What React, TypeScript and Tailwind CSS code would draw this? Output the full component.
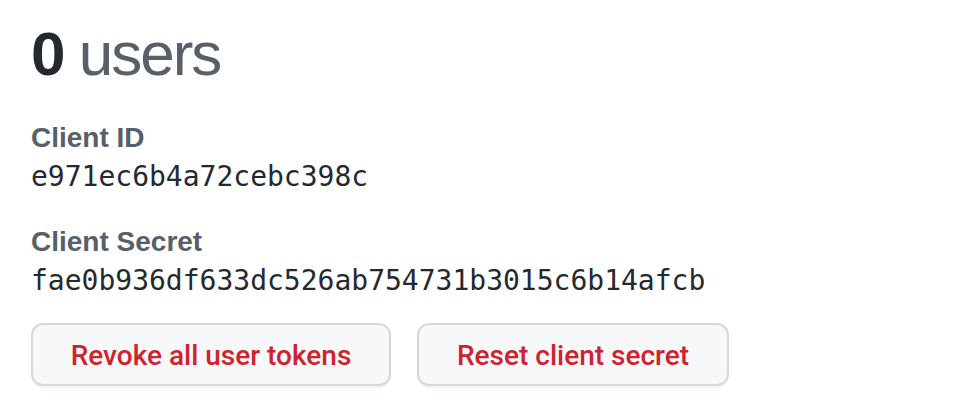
export default function App() {
  const fields = [
    { label: 'Client ID', value: 'e971ec6b4a72cebc398c' },
    { label: 'Client Secret', value: 'fae0b936df633dc526ab754731b3015c6b14afcb' },
  ];

  return (
    <div className="min-h-screen bg-white pl-[31px] pt-[23px] font-['Liberation_Sans',Arial,sans-serif] text-[#24292f]">
      {/* user count */}
      <h2 className="text-[62px] leading-none tracking-[-2px]">
        <span className="font-bold text-[#24292f]">0</span>{' '}
        <span className="font-normal text-[#57606a]">users</span>
      </h2>

      <div className="mt-[34px] flex flex-col gap-[26px]">
        {fields.map((f) => (
          <div key={f.label}>
            <div className="text-[28px] font-bold leading-[38px] text-[#57606a]">{f.label}</div>
            <div className="font-['DejaVu_Sans_Mono',Menlo,monospace] text-[28px] leading-[40px] text-[#24292f]">
              {f.value}
            </div>
          </div>
        ))}
      </div>

      <div className="mt-[22px] flex gap-[26px] font-['Roboto',Arial,sans-serif]">
        <button className="w-[360px] rounded-[12px] border-2 border-[#d6d9dc] bg-[#f6f8fa] pt-[11px] pb-[9px] text-center text-[28px] font-medium leading-[39px] text-[#cf222e] shadow-[0_2px_0_rgba(27,31,36,0.05)]">
          Revoke all user tokens
        </button>
        <button className="w-[312px] rounded-[12px] border-2 border-[#d6d9dc] bg-[#f6f8fa] pt-[11px] pb-[9px] text-center text-[28px] font-medium leading-[39px] text-[#cf222e] shadow-[0_2px_0_rgba(27,31,36,0.05)]">
          Reset client secret
        </button>
      </div>
    </div>
  );
}
